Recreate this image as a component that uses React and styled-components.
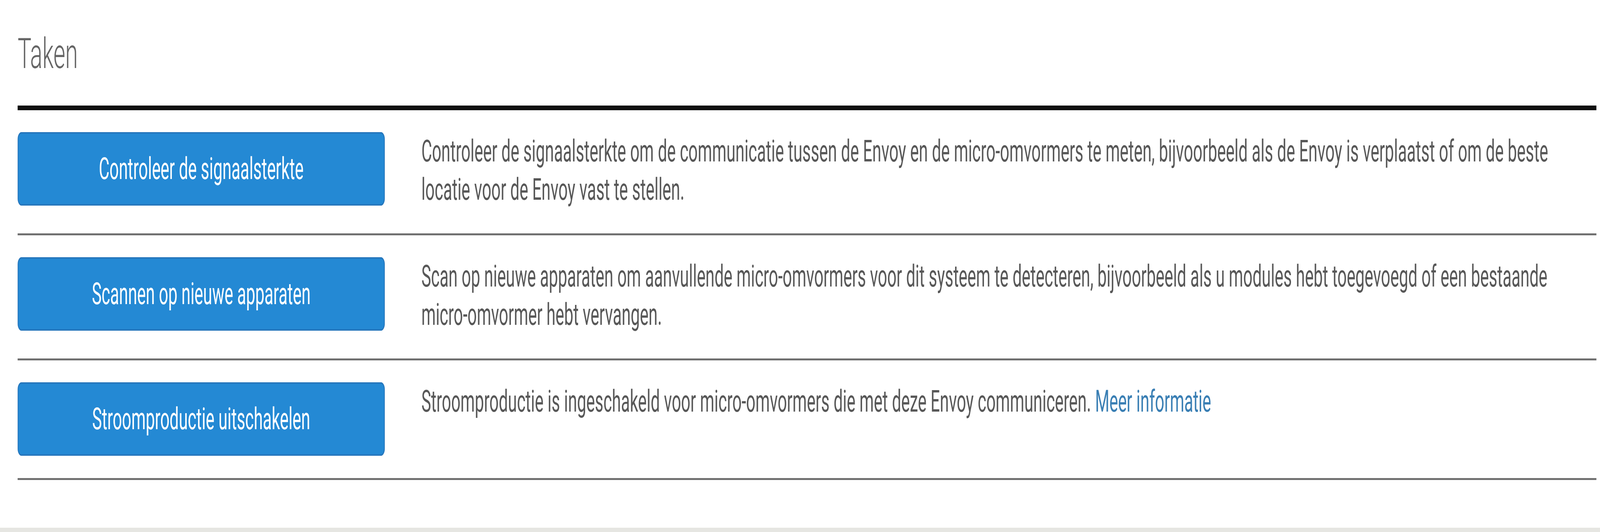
import styled, { createGlobalStyle } from 'styled-components';

// Taken-paneel: lijst met acties, elk met knop en uitleg

const DESIGN_WIDTH = 7530;

const GlobalStyle = createGlobalStyle`
  html, body {
    margin: 0;
    padding: 0;
    background: #ffffff;
    overflow: hidden;
  }
  body {
    font-family: Roboto, "Liberation Sans", Arial, sans-serif;
    color: #555555;
  }
`;

const Viewport = styled.div`
  width: 100vw;
  height: 1361px;
  overflow: hidden;
`;

const Page = styled.div`
  width: ${DESIGN_WIDTH}px;
  height: 1361px;
  display: flex;
  flex-direction: column;
  background: #ffffff;
  transform-origin: 0 0;
`;

const Panel = styled.section`
  flex: 1;
  padding: 0 17px 0 83px;
`;

const Title = styled.h2`
  margin: 0;
  padding: 74px 0 0 0;
  height: 282px;
  box-sizing: border-box;
  font-family: Roboto, "Liberation Sans", Arial, sans-serif;
  font-weight: 300;
  font-size: 108px;
  line-height: 126px;
  color: #666666;
  border-bottom: 12px solid #111111;
`;

const TaskList = styled.ul`
  list-style: none;
  margin: 0;
  padding: 0;
`;

const TaskRow = styled.li`
  display: flex;
  align-items: flex-start;
  gap: 172px;
  padding: 56px 0 57px 0;
  border-bottom: 5px solid #707070;
`;

const TaskButton = styled.button`
  flex: 0 0 1728px;
  height: 188px;
  border: 4px solid #2677bd;
  border-radius: 18px;
  background: #2489d4;
  color: #ffffff;
  font-family: Roboto, "Liberation Sans", Arial, sans-serif;
  font-size: 77px;
  font-weight: 400;
  cursor: pointer;
`;

const Description = styled.p`
  flex: 1;
  margin: 0;
  padding-bottom: ${(p) => (p.$lines > 1 ? '6px' : '0')};
  font-size: 77px;
  line-height: 98px;
  color: #585858;
`;

const MoreLink = styled.a`
  color: #3a7fb4;
  text-decoration: none;
`;

const Footer = styled.div`
  height: 11px;
  margin-top: auto;
  background: #e6e6e2;
`;

const tasks = [
  {
    label: 'Controleer de signaalsterkte',
    text: 'Controleer de signaalsterkte om de communicatie tussen de Envoy en de micro-omvormers te meten, bijvoorbeeld als de Envoy is verplaatst of om de beste locatie voor de Envoy vast te stellen.',
    lines: 2,
  },
  {
    label: 'Scannen op nieuwe apparaten',
    text: 'Scan op nieuwe apparaten om aanvullende micro-omvormers voor dit systeem te detecteren, bijvoorbeeld als u modules hebt toegevoegd of een bestaande micro-omvormer hebt vervangen.',
    lines: 2,
  },
  {
    label: 'Stroomproductie uitschakelen',
    text: 'Stroomproductie is ingeschakeld voor micro-omvormers die met deze Envoy communiceren.',
    link: 'Meer informatie',
    lines: 1,
  },
];

export default function App() {
  // het venster kan smaller zijn dan het ontwerp: horizontaal passend maken
  const scale = Math.min(1, window.innerWidth / DESIGN_WIDTH);

  return (
    <Viewport>
      <GlobalStyle />
      <Page style={{ transform: `scaleX(${scale})` }}>
        <Panel>
          <Title>Taken</Title>
          <TaskList>
            {tasks.map((t) => (
              <TaskRow key={t.label}>
                <TaskButton type="button">{t.label}</TaskButton>
                <Description $lines={t.lines}>
                  {t.text}
                  {t.link && (
                    <>
                      {' '}
                      <MoreLink href="#">{t.link}</MoreLink>
                    </>
                  )}
                </Description>
              </TaskRow>
            ))}
          </TaskList>
        </Panel>
        <Footer />
      </Page>
    </Viewport>
  );
}
